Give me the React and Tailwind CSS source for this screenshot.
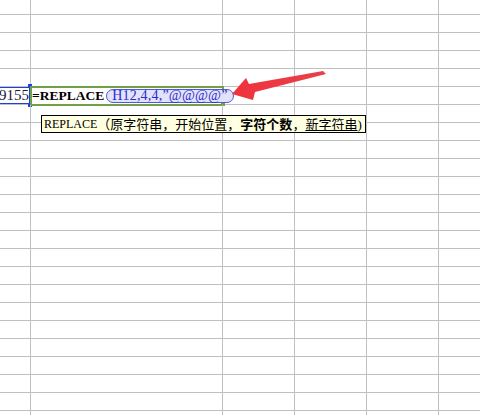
const COLS = ["w-[31px]", "w-[192px]", "w-[72px]", "w-[72px]", "w-[72px]"];
const ROWS = 22;
const FORMULA_ROW = 4;

const serif = { fontFamily: '"Liberation Serif", "Noto Sans CJK SC", serif' };

const GridRow = ({ className = "", children }) => (
  <div className={`flex shrink-0 border-b border-[#c0c0c0] ${className}`}>
    {COLS.map((w, i) => (
      <div key={i} className={`${w} shrink-0 border-r border-[#c0c0c0] relative`}>
        {children && children[i]}
      </div>
    ))}
    <div className="flex-1" />
  </div>
);

const FormulaCells = () => [
  // referenced cell (blue border)
  <div key="ref" className="h-full">
    <div className="absolute inset-0 overflow-hidden flex items-center justify-end pr-px">
      <span className="text-[15px] leading-none text-[#1a1a3a]" style={serif}>
        9155
      </span>
    </div>
    <div className="absolute top-0 bottom-0 -left-[2px] -right-px border border-r-2 border-[#1e3ee0]" />
    <div className="absolute -top-[3px] -right-[2px] w-[4px] h-[4px] bg-[#1e3ee0]" />
    <div className="absolute -bottom-[3px] -right-[2px] w-[4px] h-[4px] bg-[#1e3ee0]" />
  </div>,
  // formula being edited
  <div key="formula" className="h-full">
    <div className="absolute -left-px -top-px w-[194px] h-[20px] border-2 border-[#72a046]" />
    <div className="absolute left-[190px] top-[15px] w-[4px] h-[4px] bg-[#72a046]" />
    <div className="relative z-10 flex items-center h-full pl-px whitespace-nowrap">
      <span className="text-[13.5px] font-bold leading-none text-black" style={serif}>
        =REPLACE
      </span>
      <span
        className="ml-[2px] flex items-center h-[14px] px-[5px] rounded-full border border-[#5058d8] bg-[#e2e2fa] text-[14px] leading-none tracking-[0.2px] text-[#2a2ad0]"
        style={serif}
      >
        H12,4,4,”@@@@”
      </span>
    </div>
  </div>,
  null,
  null,
  null,
];

const App = () => {
  return (
    <div className="relative w-[480px] h-[415px] overflow-hidden bg-white flex flex-col">
      <GridRow className="h-[15px]" />
      {Array.from({ length: ROWS }).map((_, i) =>
        i === FORMULA_ROW ? (
          <GridRow key={i} className="h-[18px]">
            {FormulaCells()}
          </GridRow>
        ) : (
          <GridRow key={i} className="h-[18px]" />
        )
      )}
      <div className="flex flex-1">
        {COLS.map((w, i) => (
          <div key={i} className={`${w} shrink-0 border-r border-[#c0c0c0]`} />
        ))}
      </div>

      {/* function hint tooltip */}
      <div
        className="absolute left-[41px] top-[115px] h-[18px] flex items-center pl-[2px] pr-[3px] border border-black bg-[#ffffe1] text-[13px] leading-none text-black whitespace-nowrap z-20"
        style={serif}
      >
        <span className="text-[12px]">REPLACE</span>
        <span>（原字符串，开始位置，</span>
        <span className="font-bold">字符个数</span>
        <span>，</span>
        <span className="underline">新字符串</span>
        <span>)</span>
      </div>

      {/* red arrow */}
      <svg className="absolute left-0 top-0 z-30" width="480" height="415" viewBox="0 0 480 415">
        <defs>
          <linearGradient id="arr" x1="0" y1="0" x2="1" y2="0">
            <stop offset="0" stopColor="#f0323c" />
            <stop offset="1" stopColor="#e8404a" />
          </linearGradient>
        </defs>
        <polygon
          points="232,94 246,78 249,84 323,71 326,74 255,92 253,100"
          fill="url(#arr)"
        />
      </svg>
    </div>
  );
};

export default App;
